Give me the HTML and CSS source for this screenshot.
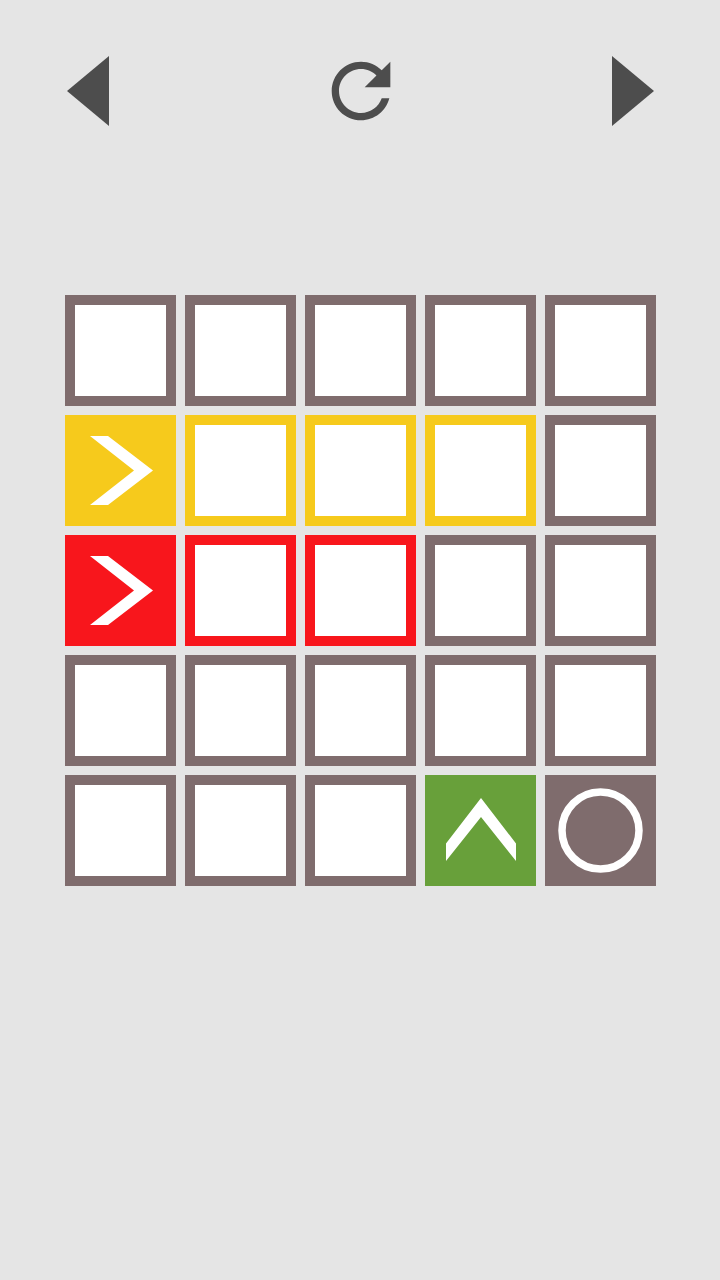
FILE: index.html
```html
<!DOCTYPE html>
<html>
<head>
<meta charset="utf-8">
<link rel="stylesheet" href="styles.css">
</head>
<body>
<header class="topbar">
  <button class="nav-btn" aria-label="Previous">
    <svg width="42" height="70" viewBox="0 0 42 70"><polygon points="0,35 42,0 42,70" fill="#4d4d4d"/></svg>
  </button>
  <button class="nav-btn refresh" aria-label="Restart">
    <svg width="88" height="88" viewBox="0 0 24 24"><path fill="#4d4d4d" d="M17.65 6.35C16.2 4.9 14.21 4 12 4c-4.42 0-7.99 3.58-7.99 8s3.57 8 7.99 8c3.73 0 6.84-2.55 7.73-6h-2.08c-.82 2.33-3.04 4-5.65 4-3.31 0-6-2.69-6-6s2.69-6 6-6c1.66 0 3.14.69 4.22 1.78L13 11h7V4l-2.35 2.35z"/></svg>
  </button>
  <button class="nav-btn" aria-label="Next">
    <svg width="42" height="70" viewBox="0 0 42 70"><polygon points="0,0 42,35 0,70" fill="#4d4d4d"/></svg>
  </button>
</header>

<main class="board">
  <div class="cell"></div><div class="cell"></div><div class="cell"></div><div class="cell"></div><div class="cell"></div>

  <div class="cell yellow filled"><svg class="glyph" viewBox="0 0 111 111"><polygon points="25,21 43,21 88,55.5 43,90 25,90 69,55.5" fill="#fff"/></svg></div>
  <div class="cell yellow"></div><div class="cell yellow"></div><div class="cell yellow"></div><div class="cell"></div>

  <div class="cell red filled"><svg class="glyph" viewBox="0 0 111 111"><polygon points="25,21 43,21 88,55.5 43,90 25,90 69,55.5" fill="#fff"/></svg></div>
  <div class="cell red"></div><div class="cell red"></div><div class="cell"></div><div class="cell"></div>

  <div class="cell"></div><div class="cell"></div><div class="cell"></div><div class="cell"></div><div class="cell"></div>

  <div class="cell"></div><div class="cell"></div><div class="cell"></div>
  <div class="cell green filled"><svg class="glyph" viewBox="0 0 111 111"><polygon points="56,23 91,68.5 91,86 56,42 21,86 21,68.5" fill="#fff"/></svg></div>
  <div class="cell filled"><svg class="glyph" viewBox="0 0 111 111"><circle cx="55.5" cy="55.5" r="38.5" fill="none" stroke="#fff" stroke-width="7.5"/></svg></div>
</main>
</body>
</html>
```

FILE: styles.css
```css
html, body {
  margin: 0;
  padding: 0;
  background: #e5e5e5;
  font-family: "Liberation Sans", Arial, sans-serif;
}

.topbar {
  display: flex;
  justify-content: space-between;
  align-items: center;
  height: 90px;
  margin-top: 46px;
  padding: 0 66px 0 67px;
}

.nav-btn {
  border: 0;
  padding: 0;
  margin: 0;
  background: none;
  display: flex;
  align-items: center;
  justify-content: center;
  cursor: pointer;
}

.nav-btn svg {
  display: block;
}

.board {
  display: grid;
  grid-template-columns: repeat(5, 111px);
  grid-auto-rows: 111px;
  gap: 9px;
  margin: 159px 0 0 65px;
  width: max-content;
}

.cell {
  box-sizing: border-box;
  border: 10px solid #7f6c6d;
  background: #ffffff;
  position: relative;
}

.cell.yellow { border-color: #f6ca1c; }
.cell.red { border-color: #f8161c; }
.cell.green { border-color: #68a03a; }

.cell.filled { border: 0; background: #7f6c6d; }
.cell.yellow.filled { background: #f6ca1c; }
.cell.red.filled { background: #f8161c; }
.cell.green.filled { background: #68a03a; }

.glyph {
  display: block;
  width: 111px;
  height: 111px;
}
```
